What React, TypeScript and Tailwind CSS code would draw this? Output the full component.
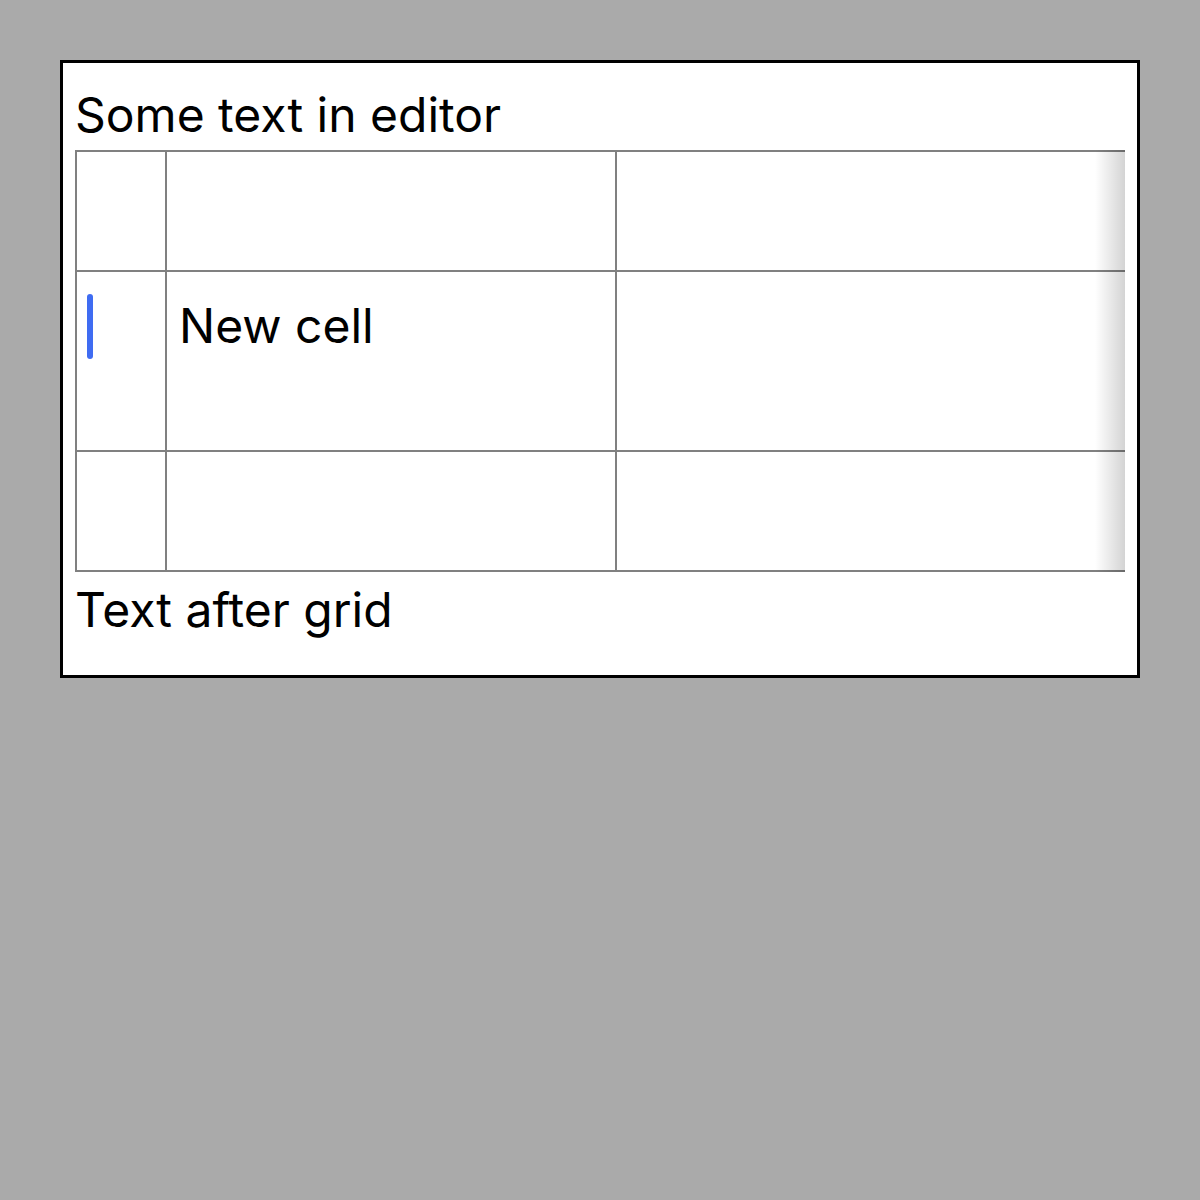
const cols = ['w-[90px]', 'w-[450px]', 'w-[600px]'];
const rows = ['h-[120px]', 'h-[180px]', 'h-[120px]'];

function Caret() {
    return <span className="absolute left-[10px] top-[22px] w-[6px] h-[65px] rounded-full bg-[#3f6cf2]" />;
}

export default function App() {
    return (
        <div className="min-h-[1200px] bg-[#aaaaaa] pt-[60px] pl-[60px] font-['Inter',sans-serif] text-black">
            <div className="w-[1080px] h-[618px] border-[3px] border-black bg-white px-[12px] pt-[16px]">
                <p className="text-[48px] leading-[72px] h-[71px]">Some text in editor</p>

                {/* grid, scrolled horizontally with a fade on the right edge */}
                <div className="relative w-[1050px] overflow-hidden">
                    <div className="flex flex-col w-max border-l-2 border-t-2 border-[#808080]">
                        {rows.map((h, r) => (
                            <div key={r} className="flex">
                                {cols.map((w, c) => (
                                    <div
                                        key={c}
                                        className={`relative ${w} ${h} shrink-0 border-r-2 border-b-2 border-[#808080]`}
                                    >
                                        {r === 1 && c === 0 && <Caret />}
                                        {r === 1 && c === 1 && (
                                            <p className="px-[12px] pt-[18px] text-[48px] leading-[72px]">New cell</p>
                                        )}
                                    </div>
                                ))}
                            </div>
                        ))}
                    </div>
                    <div className="absolute right-0 top-0 bottom-0 w-[30px] bg-gradient-to-r from-black/0 to-black/[0.17]" />
                </div>

                <p className="text-[48px] leading-[72px] pt-[2px]">Text after grid</p>
            </div>
        </div>
    );
}
